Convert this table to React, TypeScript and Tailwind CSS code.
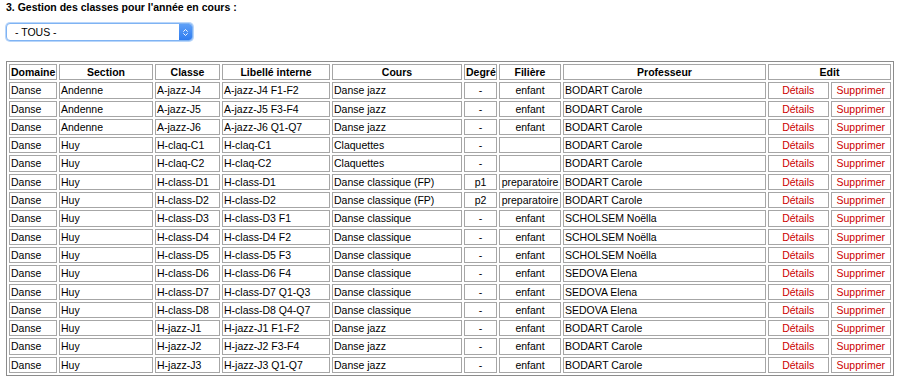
import { ChevronsUpDown } from 'lucide-react';

type Row = {
  domaine: string;
  section: string;
  classe: string;
  libelle: string;
  cours: string;
  degre: string;
  filiere: string;
  prof: string;
};

const rows: Row[] = [
  { domaine: 'Danse', section: 'Andenne', classe: 'A-jazz-J4', libelle: 'A-jazz-J4 F1-F2', cours: 'Danse jazz', degre: '-', filiere: 'enfant', prof: 'BODART Carole' },
  { domaine: 'Danse', section: 'Andenne', classe: 'A-jazz-J5', libelle: 'A-jazz-J5 F3-F4', cours: 'Danse jazz', degre: '-', filiere: 'enfant', prof: 'BODART Carole' },
  { domaine: 'Danse', section: 'Andenne', classe: 'A-jazz-J6', libelle: 'A-jazz-J6 Q1-Q7', cours: 'Danse jazz', degre: '-', filiere: 'enfant', prof: 'BODART Carole' },
  { domaine: 'Danse', section: 'Huy', classe: 'H-claq-C1', libelle: 'H-claq-C1', cours: 'Claquettes', degre: '-', filiere: '', prof: 'BODART Carole' },
  { domaine: 'Danse', section: 'Huy', classe: 'H-claq-C2', libelle: 'H-claq-C2', cours: 'Claquettes', degre: '-', filiere: '', prof: 'BODART Carole' },
  { domaine: 'Danse', section: 'Huy', classe: 'H-class-D1', libelle: 'H-class-D1', cours: 'Danse classique (FP)', degre: 'p1', filiere: 'preparatoire', prof: 'BODART Carole' },
  { domaine: 'Danse', section: 'Huy', classe: 'H-class-D2', libelle: 'H-class-D2', cours: 'Danse classique (FP)', degre: 'p2', filiere: 'preparatoire', prof: 'BODART Carole' },
  { domaine: 'Danse', section: 'Huy', classe: 'H-class-D3', libelle: 'H-class-D3 F1', cours: 'Danse classique', degre: '-', filiere: 'enfant', prof: 'SCHOLSEM Noëlla' },
  { domaine: 'Danse', section: 'Huy', classe: 'H-class-D4', libelle: 'H-class-D4 F2', cours: 'Danse classique', degre: '-', filiere: 'enfant', prof: 'SCHOLSEM Noëlla' },
  { domaine: 'Danse', section: 'Huy', classe: 'H-class-D5', libelle: 'H-class-D5 F3', cours: 'Danse classique', degre: '-', filiere: 'enfant', prof: 'SCHOLSEM Noëlla' },
  { domaine: 'Danse', section: 'Huy', classe: 'H-class-D6', libelle: 'H-class-D6 F4', cours: 'Danse classique', degre: '-', filiere: 'enfant', prof: 'SEDOVA Elena' },
  { domaine: 'Danse', section: 'Huy', classe: 'H-class-D7', libelle: 'H-class-D7 Q1-Q3', cours: 'Danse classique', degre: '-', filiere: 'enfant', prof: 'SEDOVA Elena' },
  { domaine: 'Danse', section: 'Huy', classe: 'H-class-D8', libelle: 'H-class-D8 Q4-Q7', cours: 'Danse classique', degre: '-', filiere: 'enfant', prof: 'SEDOVA Elena' },
  { domaine: 'Danse', section: 'Huy', classe: 'H-jazz-J1', libelle: 'H-jazz-J1 F1-F2', cours: 'Danse jazz', degre: '-', filiere: 'enfant', prof: 'BODART Carole' },
  { domaine: 'Danse', section: 'Huy', classe: 'H-jazz-J2', libelle: 'H-jazz-J2 F3-F4', cours: 'Danse jazz', degre: '-', filiere: 'enfant', prof: 'BODART Carole' },
  { domaine: 'Danse', section: 'Huy', classe: 'H-jazz-J3', libelle: 'H-jazz-J3 Q1-Q7', cours: 'Danse jazz', degre: '-', filiere: 'enfant', prof: 'BODART Carole' },
];

const cell = 'border border-[#a6a6a6] px-[1px] py-[1px] whitespace-nowrap';
const th = `${cell} font-bold text-center`;

export default function App() {
  return (
    <div className="bg-white text-black text-[10.5px] leading-[12.3px] font-['Liberation_Sans',Arial,sans-serif] px-[6px] pt-[1px]">
      <h3 className="font-bold text-[10.5px] leading-[13px]">3. Gestion des classes pour l'année en cours :</h3>

      <div className="mt-[9px] w-[187px] h-[18px] flex items-center rounded-[4px] border border-[#7fb3f3] shadow-[0_0_0_1px_#b9d6fa] bg-white overflow-hidden">
        <span className="flex-1 pl-[8px] text-[10.5px]">- TOUS -</span>
        <span className="w-[13px] h-full bg-gradient-to-b from-[#5fa0f7] to-[#2f7cf0] flex items-center justify-center text-white">
          <ChevronsUpDown size={9} strokeWidth={2.5} />
        </span>
      </div>

      <table className="mt-[20px] border-separate border-spacing-[2px] border border-[#8c8c8c] w-[888px] table-fixed">
        <thead>
          <tr>
            <th className={`${th} w-[48px]`}>Domaine</th>
            <th className={`${th} w-[94px]`}>Section</th>
            <th className={`${th} w-[65px]`}>Classe</th>
            <th className={`${th} w-[108px]`}>Libellé interne</th>
            <th className={`${th} w-[130px]`}>Cours</th>
            <th className={`${th} w-[33px]`}>Degré</th>
            <th className={`${th} w-[62px]`}>Filière</th>
            <th className={`${th} w-[203px]`}>Professeur</th>
            <th className={th} colSpan={2}>Edit</th>
          </tr>
        </thead>
        <tbody>
          {rows.map((r) => (
            <tr key={r.classe}>
              <td className={cell}>{r.domaine}</td>
              <td className={cell}>{r.section}</td>
              <td className={cell}>{r.classe}</td>
              <td className={cell}>{r.libelle}</td>
              <td className={cell}>{r.cours}</td>
              <td className={`${cell} text-center`}>{r.degre}</td>
              <td className={`${cell} text-center`}>{r.filiere}</td>
              <td className={cell}>{r.prof}</td>
              <td className={`${cell} text-center text-[#cc0000] w-[60px]`}>Détails</td>
              <td className={`${cell} text-center text-[#cc0000] w-[61px]`}>Supprimer</td>
            </tr>
          ))}
        </tbody>
      </table>
    </div>
  );
}
